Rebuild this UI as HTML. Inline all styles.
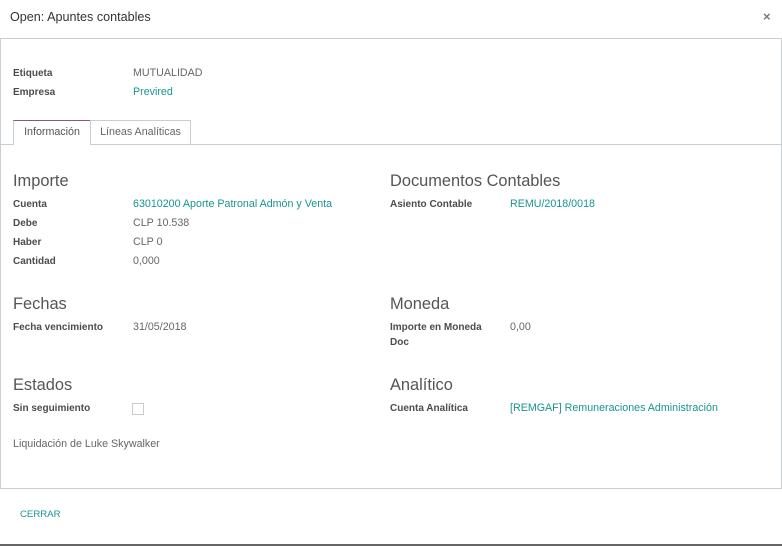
<!DOCTYPE html>
<html><head><meta charset="utf-8"><style>
*{margin:0;padding:0;box-sizing:border-box}
body{width:782px;height:546px;background:#fff;font-family:"Liberation Sans",sans-serif;font-size:10.7px;color:#666;position:relative;overflow:hidden}
.a{position:absolute;white-space:nowrap}
.t{font-size:12.6px;color:#333}
.l{font-weight:bold;color:#4c4c4c;font-size:10px}
.v{color:#666}
.k{color:#17958f}
.h{font-size:16.4px;color:#555}
.sheet{position:absolute;left:0;top:38px;width:782px;height:451px;border:1px solid #c9ced6}
</style></head><body>
<div class="a t" style="left:10px;top:10px">Open: Apuntes contables</div>
<div class="a" style="left:763px;top:9px;font-size:13px;color:#777;font-weight:bold">×</div>
<div class="sheet"></div>
<div class="a l" style="left:13px;top:68px">Etiqueta</div>
<div class="a v" style="left:133px;top:67px">MUTUALIDAD</div>
<div class="a l" style="left:13px;top:87px">Empresa</div>
<div class="a k" style="left:133px;top:86px">Previred</div>
<div class="a" style="left:1px;top:144px;width:780px;border-top:1px solid #c9ced6"></div>
<div class="a" style="left:13px;top:120px;width:78px;height:25px;border:1px solid #c9ced6;border-top:1px solid #875a7b;border-bottom:none;background:#fff;text-align:center;line-height:23px;color:#555">Información</div>
<div class="a" style="left:90px;top:120px;width:101px;height:24px;border:1px solid #c9ced6;border-bottom:none;text-align:center;line-height:23px;color:#666">Líneas Analíticas</div>
<div class="a h" style="left:13px;top:172px">Importe</div>
<div class="a l" style="left:13px;top:199px">Cuenta</div>
<div class="a k" style="left:133px;top:198px">63010200 Aporte Patronal Admón y Venta</div>
<div class="a l" style="left:13px;top:218px">Debe</div>
<div class="a v" style="left:133px;top:217px">CLP 10.538</div>
<div class="a l" style="left:13px;top:237px">Haber</div>
<div class="a v" style="left:133px;top:236px">CLP 0</div>
<div class="a l" style="left:13px;top:256px">Cantidad</div>
<div class="a v" style="left:133px;top:255px">0,000</div>
<div class="a h" style="left:13px;top:295px">Fechas</div>
<div class="a l" style="left:13px;top:322px">Fecha vencimiento</div>
<div class="a v" style="left:133px;top:321px">31/05/2018</div>
<div class="a h" style="left:13px;top:376px">Estados</div>
<div class="a l" style="left:13px;top:403px">Sin seguimiento</div>
<div class="a" style="left:132px;top:403px;width:12px;height:12px;border:1px solid #ccc"></div>
<div class="a v" style="left:13px;top:438px">Liquidación de Luke Skywalker</div>
<div class="a h" style="left:390px;top:172px">Documentos Contables</div>
<div class="a l" style="left:390px;top:199px">Asiento Contable</div>
<div class="a k" style="left:510px;top:198px">REMU/2018/0018</div>
<div class="a h" style="left:390px;top:295px">Moneda</div>
<div class="a l" style="left:390px;top:322px">Importe en Moneda</div>
<div class="a l" style="left:390px;top:337px">Doc</div>
<div class="a v" style="left:510px;top:321px">0,00</div>
<div class="a h" style="left:390px;top:376px">Analítico</div>
<div class="a l" style="left:390px;top:403px">Cuenta Analítica</div>
<div class="a k" style="left:510px;top:402px">[REMGAF] Remuneraciones Administración</div>
<div class="a k" style="left:20px;top:509px;font-size:9.6px">CERRAR</div>
<div class="a" style="left:0;top:544px;width:782px;height:2px;background:#666"></div>
</body></html>
